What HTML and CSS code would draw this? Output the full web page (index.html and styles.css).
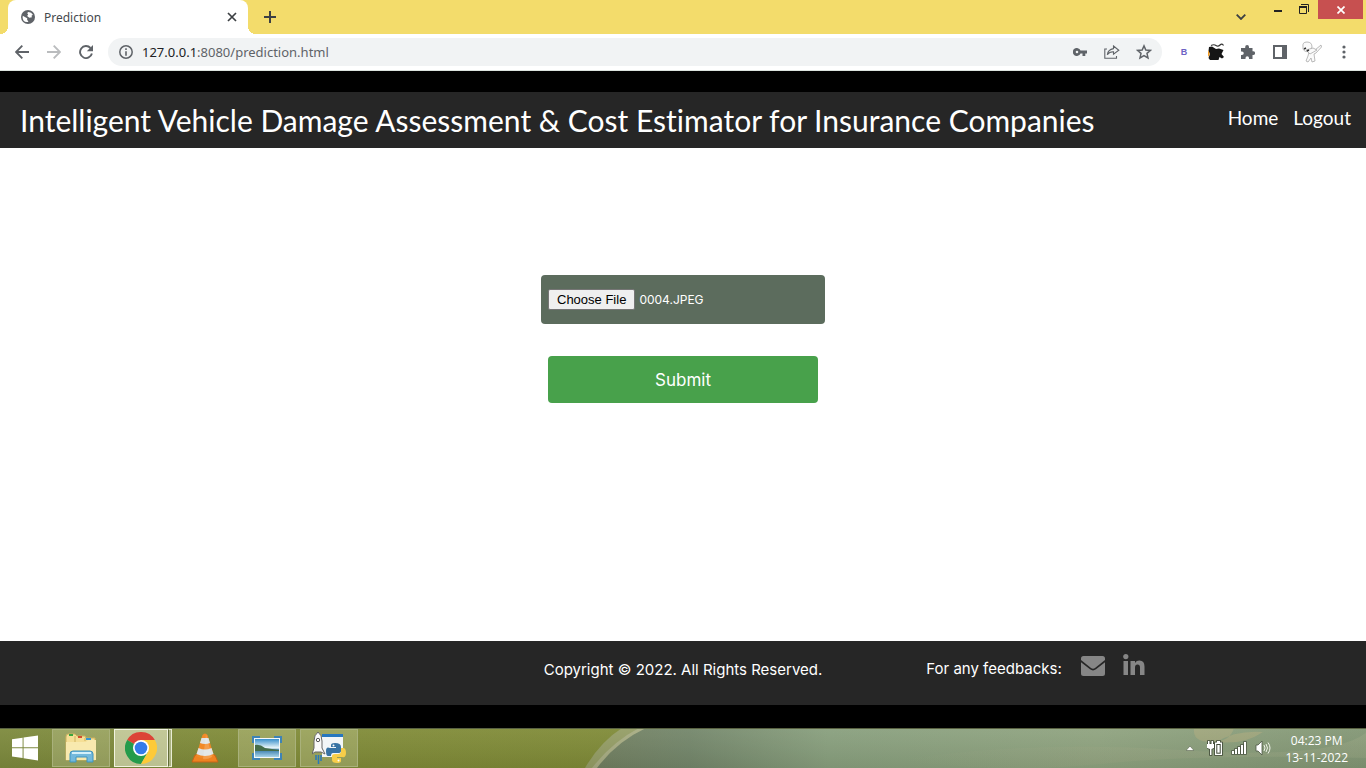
FILE: index.html
```html
<!DOCTYPE html>
<html lang="en">
<head>
<meta charset="utf-8">
<meta name="viewport" content="width=device-width, initial-scale=1">
<title>Prediction</title>
<link rel="stylesheet" href="styles.css">
</head>
<body>
<div class="tabstrip">
  <div class="tab">
    <svg class="favicon" viewBox="0 0 16 16" aria-hidden="true"><circle cx="8" cy="8" r="8" fill="#5f6368"/><path d="M2 6.500 5.500 8.500Q8 9 7 11L8.500 13.500Q5 14.500 2.800 12Q1.300 9 2 6.500ZM8.500 2.200Q12 2.400 13.600 5.500L12 6.500 12.500 8.200 9.500 8.800 7 6.800 8.200 5 7 3.500Z" fill="#fff"/></svg>
    <span class="tab-title">Prediction</span>
    <button class="tab-close" aria-label="Close tab"><svg width="10" height="10" viewBox="0 0 10 10"><path d="M1 1 9 9M9 1 1 9" stroke="#3c4043" stroke-width="1.700"/></svg></button>
  </div>
  <button class="new-tab" aria-label="New tab"><svg width="12" height="12" viewBox="0 0 12 12"><path d="M6 0V12M0 6H12" stroke="#3c4043" stroke-width="2"/></svg></button>
  <div class="window-controls">
    <button class="tab-search" aria-label="Search tabs"><svg width="10" height="6" viewBox="0 0 10 6"><path d="M.7.7 5 5 9.300.7" fill="none" stroke="#3c4043" stroke-width="1.800"/></svg></button>
    <button class="win-button" aria-label="Minimize"><svg width="10" height="6" viewBox="0 0 10 6"><path d="M1 4H9V6H1Z" fill="#222"/></svg></button>
    <button class="win-button" aria-label="Restore"><svg width="10" height="10" viewBox="0 0 10 10"><path d="M2 .5H9.500V8M.5 2.500H7.500V9.500H.5Z" fill="none" stroke="#222"/><path d="M0 2H8V4H0Z" fill="#222"/></svg></button>
    <button class="win-close" aria-label="Close window"><svg width="8" height="8" viewBox="0 0 8 8"><path d="M.5.5 7.500 7.500M7.500.5.5 7.500" stroke="#fff" stroke-width="1.700"/></svg></button>
  </div>
</div>
<div class="toolbar">
  <button class="tool" aria-label="Back"><svg width="14" height="14" viewBox="0 0 14 14"><path d="M14 7H1.500M7.300.7 1 7 7.300 13.300" fill="none" stroke="#5f6368" stroke-width="1.900"/></svg></button>
  <button class="tool" aria-label="Forward"><svg width="14" height="14" viewBox="0 0 14 14"><path d="M0 7H12.500M6.700.7 13 7 6.700 13.300" fill="none" stroke="#babcbe" stroke-width="1.900"/></svg></button>
  <button class="tool" aria-label="Reload"><svg width="14" height="14" viewBox="0 0 14 14"><path d="M12.900 8.500A6 6 0 1 1 11.500 3" fill="none" stroke="#5f6368" stroke-width="1.900"/><path d="M14 0V6.200H7.800Z" fill="#5f6368"/></svg></button>
  <div class="omnibox">
    <button class="site-info" aria-label="Site information"><svg width="14" height="14" viewBox="0 0 14 14"><circle cx="7" cy="7" r="6.200" fill="none" stroke="#5f6368" stroke-width="1.500"/><path d="M6.200 3.300H7.800V5H6.200ZM6.200 6.200H7.800V10.700H6.200Z" fill="#5f6368"/></svg></button>
    <span class="url"><span class="host">127.0.0.1</span>:8080/prediction.html</span>
    <button class="tool" aria-label="Passwords"><svg width="14" height="8" viewBox="0 0 14 8"><path d="M7.500 2.500A4 4 0 1 0 7.500 5.500H9.500V8H12.300V5.500H14V2.500ZM4 2.700A1.300 1.300 0 1 1 4 5.300 1.300 1.300 0 1 1 4 2.700Z" fill="#5f6368" fill-rule="evenodd"/></svg></button>
    <button class="tool" aria-label="Share"><svg width="16" height="14" viewBox="0 0 16 14"><path d="M3 4H.8V13.300H12.500V11M9.500 1 14.800 5.200 9.500 9.200V6.700Q5.500 6.500 3.300 9.700 4 4.500 9.500 3.600Z" fill="none" stroke="#5f6368" stroke-width="1.100"/></svg></button>
    <button class="tool" aria-label="Bookmark"><svg width="16" height="16" viewBox="0 0 14 14"><path d="M7 1.600 8.600 5.200 12.600 5.600 9.600 8.200 10.500 12.200 7 10.100 3.500 12.200 4.400 8.200 1.400 5.600 5.400 5.200Z" fill="none" stroke="#5f6368" stroke-width="1.300"/></svg></button>
  </div>
  <button class="tool extension" aria-label="Extension B">B</button>
  <button class="tool" aria-label="Cat extension"><svg width="18" height="18" viewBox="0 0 18 18"><path d="M4 2.500Q7 1 9 2.500T13 2 16.500 2.500" fill="none" stroke="#333" stroke-width="1.200"/><path d="M2 4 5 3.500 9 6 12 5.500 16.500 7 14.500 11 17 14 15 15.500 12.500 14 11.500 17H3L1.500 15 3 11 1.500 8Z" fill="#151515"/><path d="M1 7 3 11 1 14Z" fill="#f29b23"/></svg></button>
  <button class="tool" aria-label="Extensions"><svg width="14" height="14" viewBox="0 0 14 14"><path d="M1 3H4.200V2A1.900 1.900 0 0 1 8 2V3H11.500V6.300H12.200A1.800 1.800 0 0 1 12.200 10H11.500V14H8V13A1.700 1.700 0 0 0 4.500 13V14H0V10H1A1.700 1.700 0 0 0 1 6.500H0V3Z" fill="#5f6368"/></svg></button>
  <button class="tool" aria-label="Side panel"><svg width="14" height="14" viewBox="0 0 14 14"><path d="M0 0H14V14H0ZM2 2V12H9V2Z" fill="#5f6368" fill-rule="evenodd"/></svg></button>
  <button class="tool" aria-label="Profile"><svg width="22" height="22" viewBox="0 0 22 22" fill="#fafafa" stroke="#aaa" stroke-width=".8"><path d="M8 11 14 9 20 4 20.500 6 15 12 13 13 14 20 11 21 10 17 7 21 5 20 7 15Z"/><path d="M2 6Q1 1 6 1T11 6L9 10Q4 12 2 8Z"/><path d="M5 9 12 7 16 9 9 13Z"/><path d="M3 8 5 7M6 10 8 9" stroke="#333" stroke-width="1.500"/></svg></button>
  <button class="tool" aria-label="Menu"><svg width="4" height="14" viewBox="0 0 4 14" fill="#5f6368"><circle cx="2" cy="2" r="1.600"/><circle cx="2" cy="7" r="1.600"/><circle cx="2" cy="12" r="1.600"/></svg></button>
</div>

<div class="page">
  <header class="site-header">
    <h1 class="site-title">Intelligent Vehicle Damage Assessment &amp; Cost Estimator for Insurance Companies</h1>
    <nav class="site-nav"><a href="#home">Home</a><a href="#logout">Logout</a></nav>
  </header>
  <main class="content">
    <form class="upload-form">
      <input class="file-input" id="image" type="file" aria-label="Vehicle image">
      <button class="submit" type="submit">Submit</button>
    </form>
  </main>
  <footer class="site-footer">
    <p class="copyright">Copyright © 2022. All Rights Reserved.</p>
    <div class="feedback">
      <span>For any feedbacks:</span>
      <a class="mail" href="#mail" aria-label="Email"><svg width="24" height="20" viewBox="0 0 24 20"><path d="M0 4V2.500Q0 0 2.500 0H21.500Q24 0 24 2.500V4L14 12Q12 13.500 10 12ZM0 6.300 9 13.300Q12 15.600 15 13.300L24 6.300V17.500Q24 20 21.500 20H2.500Q0 20 0 17.500Z" fill="#868686"/></svg></a>
      <a class="linkedin" href="#linkedin" aria-label="LinkedIn"><svg width="22" height="22" viewBox="0 0 22 22" fill="#868686"><circle cx="2.800" cy="2.600" r="2.600"/><path d="M.5 7H5V21H.5ZM7.500 7H12V9Q13.500 6.500 16.500 6.600 21.500 6.800 21.500 12.500V21H17V13.500Q17 10.500 14.500 10.500T12 13.500V21H7.500Z"/></svg></a>
    </div>
  </footer>
</div>

<div class="taskbar">
  <svg class="wallpaper" viewBox="0 0 1366 40" preserveAspectRatio="none" aria-hidden="true">
    <defs>
      <linearGradient id="olive"><stop offset="0" stop-color="#7c893c"/><stop offset=".2" stop-color="#808b37"/><stop offset="1" stop-color="#7d8936"/></linearGradient>
      <linearGradient id="sage"><stop offset="0" stop-color="#717f60"/><stop offset=".12" stop-color="#73866a"/><stop offset=".3" stop-color="#889f7d"/><stop offset=".65" stop-color="#8fa37f"/><stop offset="1" stop-color="#829674"/></linearGradient>
      <linearGradient id="haze" x2="0" y2="1"><stop offset="0" stop-color="#fff" stop-opacity=".06"/><stop offset="1" stop-color="#000" stop-opacity=".07"/></linearGradient>
      <linearGradient id="band"><stop offset="0" stop-color="#9ba783" stop-opacity="0"/><stop offset=".5" stop-color="#9ba783" stop-opacity=".4"/><stop offset="1" stop-color="#9ba783" stop-opacity=".4"/></linearGradient>
    </defs>
    <path d="M0 0H1366V40H0Z" fill="url(#olive)"/>
    <path d="M585 40Q600 14 622 0H1366V40Z" fill="#949d65"/>
    <path d="M592 40Q612 14 639 0H1366V40Z" fill="#a7ac82"/>
    <path d="M597 40Q616 14 646 0H1366V40Z" fill="url(#sage)"/>
    <path d="M900 32Q1030 12 1180 22T1366 5V30Q1200 26 1100 36T900 32Z" fill="url(#band)"/>
    <path d="M1194 0Q1192 14 1211 14T1234 0ZM1217 14Q1235 2 1263 4 1244 17 1217 14Z" fill="#b1ab7b" opacity=".5"/>
    <path d="M0 0H1366V40H0Z" fill="url(#haze)"/>
    <path d="M0 .5H1366" stroke="#596242"/>
  </svg>
  <button class="start" aria-label="Start"><svg width="26" height="26" viewBox="0 0 27 26"><path d="M0 4 11 2.300V12.200H0ZM12 2.100 27 0V12.200H12ZM0 13.200H11V23.300L0 21.800ZM12 13.200H27V26L12 23.700Z" fill="#fff"/></svg></button>
  <button class="task open" aria-label="File Explorer"><svg width="32" height="30" viewBox="0 0 32 30"><path d="M1 4Q1 1 3 1H10L12 3H20L21 5H30V27H1Z" fill="#f5df96" stroke="#cdb15f"/><path d="M2 9H21L23 7H31V27H1V9Z" fill="#f8e9ae"/><path d="M10 3V9M20 5V8" stroke="#cdb15f"/><path d="M4 1H8V3H4Z" fill="#39a73e"/><path d="M13 3H17V5H13Z" fill="#d34d2d"/><path d="M21 5H26V7H21Z" fill="#3695d2"/><path d="M5 29V21Q5 18 8 18H25Q28 18 28 21V29H22V24H11V29Z" fill="#73b9dc" stroke="#4194bd"/><path d="M7 20H26" stroke="#d3f0fa" stroke-width="2"/></svg></button>
  <button class="task current" aria-label="Chrome"><svg width="32" height="32" viewBox="0 0 32 32"><path d="M16 16 2.140 8A16 16 0 0 1 29.860 8H16Z" fill="#dc4437"/><path d="M2.140 8A16 16 0 0 0 16 32L22.930 20 16 16Z" fill="#249b4b"/><path d="M16 8H29.860A16 16 0 0 1 16 32L22.930 20Z" fill="#fdca38"/><path d="M9.070 20 2.140 8 10 14Z" fill="#249b4b"/><circle cx="16" cy="16" r="8" fill="#fff"/><circle cx="16" cy="16" r="6.300" fill="#347be9"/></svg></button>
  <span class="stack"></span>
  <button class="task" aria-label="VLC"><svg width="28" height="30" viewBox="0 0 28 30"><path d="M4 22H24L27 29H1Z" fill="#ee8321" stroke="#c76516"/><path d="M11.500 2Q14-1 16.500 2L23 23Q14 28 5 23Z" fill="#f28927"/><path d="M10.500 5H17.500L19 10Q14 12 9 10ZM7.500 15Q14 18 20.500 15L22.500 21Q14 25 5.500 21Z" fill="#dfe3e5"/><path d="M15 1 21 24Q16 27 12 26Z" fill="#fff" opacity=".18"/></svg></button>
  <button class="task open" aria-label="Pictures"><svg width="32" height="28" viewBox="0 0 32 28"><defs><linearGradient id="sky" x2="0" y2="1"><stop offset="0" stop-color="#388fcb"/><stop offset=".5" stop-color="#edf8fa"/><stop offset=".6" stop-color="#397cac"/><stop offset="1" stop-color="#a8d4e8"/></linearGradient></defs><path d="M1 2H9V5H23V2H31V9H29V19H31V26H23V24H9V26H1V19H3V9H1Z" fill="#5a9bc8"/><path d="M3 4H29V24H3Z" fill="#f4f8fa"/><path d="M4 5H28V23H4Z" fill="url(#sky)"/><path d="M4 11Q9 10 14 14L28 16V17H4Z" fill="#456d4a"/><path d="M2 9V3H9M23 3H30V9M30 19V25H23M9 25H2V19" fill="none" stroke="#3d83b6" stroke-width="2"/></svg></button>
  <button class="task open" aria-label="Python launcher"><svg width="34" height="32" viewBox="0 0 34 32"><path d="M10 3H31V25H10Z" fill="#f3f6f8"/><path d="M10 2H31V5H10Z" fill="#2777bf"/><path d="M6 0Q10 3 10 9V16L13 22 9 20H3L0 22 2 16V9Q2 3 6 0Z" fill="#fafafa" stroke="#666"/><circle cx="6" cy="8" r="1.700" fill="#fff" stroke="#555"/><path d="M4 23V28M6.500 23V32M9 23V29" stroke="#2778b9" stroke-width="1.500"/><path d="M23 11Q29 11 29 15V19Q29 21 26 21H21Q19 21 19 24H16Q14 24 14 19T18 16H24V15H19V13Q19 11 23 11Z" fill="#3873a4"/><path d="M29 16H31Q34 16 34 21T30 25H25V26H29V29Q29 31 25 31 20 31 20 28V24Q20 22 23 22H26Q29 22 29 19Z" fill="#f8ce49"/><circle cx="21.500" cy="13.500" r="1" fill="#fff"/><circle cx="26.500" cy="28.500" r="1" fill="#fff"/></svg></button>
  <div class="tray">
    <svg width="8" height="5" viewBox="0 0 8 5" aria-hidden="true"><path d="M4 0 8 4.500H0Z" fill="#fff" stroke="#59634e" stroke-width=".6"/></svg>
    <svg class="battery" width="16" height="16" viewBox="0 0 16 16" aria-hidden="true"><g fill="#fff" stroke="#3f4937" stroke-width="1.600" paint-order="stroke"><path d="M1 1H2.500V4H4.500V1H6V4H7V8L4.500 9V15H3V9L0 8V4H1Z"/><path fill-rule="evenodd" d="M8 2.500H10V1H13V2.500H15V15H8Z"/></g><path d="M9.300 4H13.700V13.700H9.300Z" fill="#3f4937"/><path d="M10.300 5H12.700V12.700H10.300Z" fill="#fff"/></svg>
    <svg class="signal" width="17" height="14" viewBox="0 0 17 14" aria-hidden="true"><path d="M1 10H3V13H1ZM4 8H6V13H4ZM7 6H9V13H7ZM10 4H12V13H10ZM13 1H15V13H13Z" fill="#fff" stroke="#4c5744" stroke-width="1.500" paint-order="stroke"/></svg>
    <svg width="16" height="14" viewBox="0 0 16 14" aria-hidden="true"><path d="M1 4H3L7 0V14L3 10H1Z" fill="#fff" stroke="#4c5744" stroke-width=".8"/><path d="M9 4Q11 7 9 10M11 3Q14 7 11 11M13 1.500Q17 7 13 12.500" fill="none" stroke="#eef1e8"/></svg>
    <div class="clock"><time>04:23 PM</time><time>13-11-2022</time></div>
  </div>
</div>
<script src="script.js"></script>
</body>
</html>
```
FILE: styles.css
```css
* { box-sizing: border-box; }
body { margin: 0; min-height: 100vh; display: flex; flex-direction: column; font-family: Lato, sans-serif; background: #000; }
button { border: 0; padding: 0; background: none; font: inherit; color: inherit; display: flex; align-items: center; justify-content: center; }
svg { display: block; flex: none; }

.tabstrip { display: flex; height: 34px; padding-left: 8px; background: #f3dc6b; }
.tab { position: relative; display: flex; align-items: center; width: 240px; padding: 0 8px 0 13px; gap: 9px; border-radius: 8px 8px 0 0; background: #fff; }
.tab::before, .tab::after { content: ""; position: absolute; bottom: 0; width: 8px; height: 8px; }
.tab::before { left: -8px; background: radial-gradient(circle at 0 0, transparent 8px, #fff 8px); }
.tab::after { right: -8px; background: radial-gradient(circle at 100% 0, transparent 8px, #fff 8px); }
.favicon { width: 14px; height: 14px; }
.tab-title { flex: 1; font: 12px "Noto Sans", sans-serif; color: #45494d; }
.tab-close { width: 16px; height: 16px; }
.new-tab { width: 28px; margin-left: 8px; }
.window-controls { display: flex; align-items: flex-start; margin-left: auto; padding-right: 3px; }
.tab-search { width: 28px; height: 34px; margin-right: 10px; }
.win-button { width: 26px; height: 18px; }
.win-button + .win-close { margin-left: 1px; }
.win-close { width: 45px; height: 19px; background: #c75050; }

.toolbar { display: flex; align-items: center; height: 37px; padding: 0 6px; background: #fff; border-bottom: 1px solid #dce3de; }
.tool { width: 32px; height: 28px; flex: none; }
.omnibox { display: flex; align-items: center; flex: 1; height: 28px; margin: 0 6px; padding: 0 2px 0 10px; border-radius: 14px; background: #f1f3f4; }
.site-info { width: 16px; margin-right: 8px; }
.url { flex: 1; font: 13px/20px "Noto Sans", sans-serif; color: #5f6368; }
.host { color: #202124; }
.extension { font: bold 9px "Liberation Sans", sans-serif; color: #6d63c4; }

.page { flex: 1; display: flex; flex-direction: column; padding: 21px 0 23px; }
.site-header { display: flex; align-items: center; justify-content: space-between; min-height: 56px; padding: 0 15px 0 20px; background: #262626; color: #fff; }
.site-title { margin: 0; font-size: 30px; line-height: 40px; font-weight: 400; font-variant-ligatures: none; }
.site-nav { display: flex; gap: 15px; font-size: 19px; line-height: 24px; padding-bottom: 4px; }
.site-nav a { color: #fff; text-decoration: none; }
.content { flex: 1; padding: 127px 16px 32px; background: #fff; }
.upload-form { display: flex; flex-direction: column; align-items: center; gap: 32px; }
.file-input { width: 284px; max-width: 100%; height: 49px; padding: 14px 7px; border-radius: 4px; background: #5c6c5d; color: #fff; font: 12px/20px Inter, sans-serif; }
.file-input::file-selector-button { height: 21px; padding: 1px 8px; margin-right: 4px; border: 1px solid #767676; border-radius: 2px; background: #efefef; color: #000; font: 13px "Liberation Sans", sans-serif; }
.submit { width: 270px; max-width: 100%; height: 47px; border-radius: 4px; background: #48a14b; color: #fff; font: 17px Inter, sans-serif; }
.site-footer { display: grid; grid-template-columns: 1fr auto 1fr; column-gap: 104px; align-items: start; min-height: 64px; padding: 13px 0; background: #262626; color: #fff; font: 15px/24px Inter, sans-serif; }
.copyright { grid-column: 2; margin: 0; padding-top: 4px; }
.feedback { display: flex; align-items: flex-start; }
.feedback span { padding-top: 3px; }
.mail { margin: 2px 0 0 19px; }
.linkedin { margin-left: 18px; }

.taskbar { position: relative; display: flex; align-items: center; height: 40px; overflow: hidden; color: #fff; }
.wallpaper { position: absolute; inset: 0; width: 100%; height: 100%; }
.taskbar > :not(.wallpaper) { position: relative; }
.start { width: 50px; height: 38px; margin-right: 2px; }
.task { width: 58px; height: 38px; margin-right: 4px; }
.open { background: rgba(255, 255, 230, .2); border: 1px solid #a9b17b; }
.current { width: 54px; margin-right: 0; background: rgba(255, 255, 235, .5); border: 1px solid #f1f3df; }
.stack { width: 4px; height: 38px; margin-right: 4px; background: #aab281; border: 1px solid #e9ecd4; border-left-color: #626c37; }
.tray { display: flex; align-items: center; margin-left: auto; padding-right: 18px; }
.battery { margin-left: 13px; }
.signal { margin: 0 7px 0 8px; }
.clock { display: flex; flex-direction: column; align-items: center; margin-left: 14px; padding-top: 2px; font: 12px/17px "Open Sans", sans-serif; }
```
FILE: script.js
```js
const transfer = new DataTransfer();
transfer.items.add(new File([""], "0004.JPEG", { type: "image/jpeg" }));
document.getElementById("image").files = transfer.files;
```
